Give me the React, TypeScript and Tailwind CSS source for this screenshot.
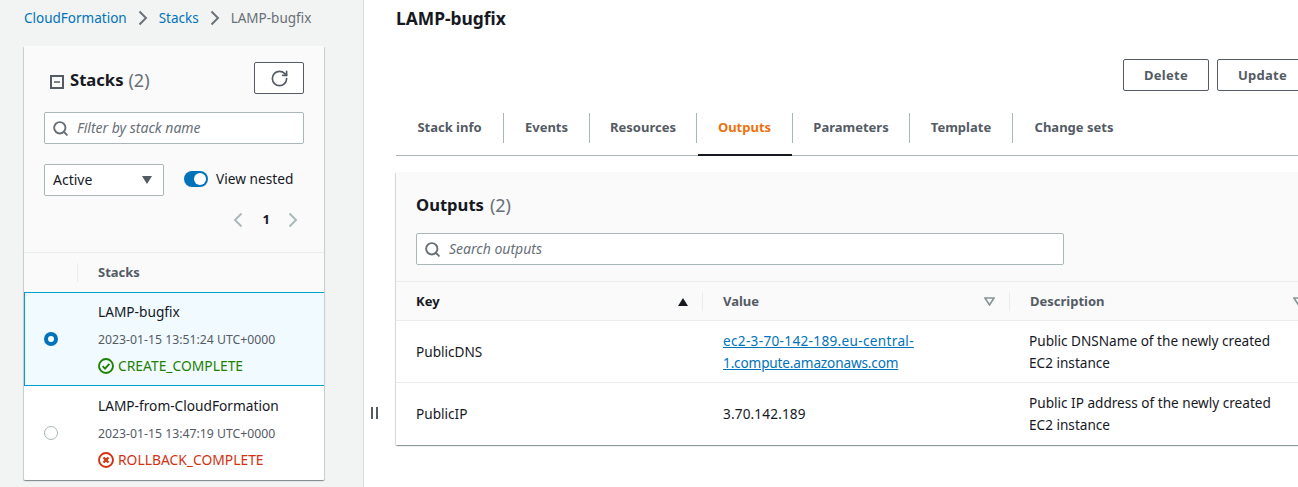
import React from 'react'
import { RotateCw, Search } from "lucide-react";

const tabs = [
  { label: "Stack info", width: "w-[108px]" },
  { label: "Events", width: "w-[86px]" },
  { label: "Resources", width: "w-[107px]" },
  { label: "Outputs", width: "w-[96px]" },
  { label: "Parameters", width: "w-[117px]" },
  { label: "Template", width: "w-[103px]" },
  { label: "Change sets", width: "w-[122px]" },
];

const font = "font-['Noto_Sans',_'Open_Sans',_sans-serif]";

const cardShadow = "shadow-[0_1px_1px_0_rgba(0,28,36,0.3),1px_1px_1px_0_rgba(0,28,36,0.15),-1px_1px_1px_0_rgba(0,28,36,0.15)]";

// Breadcrumb ve sayfalama okları
const Chevron = ({ left = false, color }: { left?: boolean; color: string }) => (
  <svg width="10" height="16" viewBox="0 0 10 16" fill="none" stroke={color} strokeWidth="1.9">
    <path d={left ? "M8.5 1.5L2 8l6.5 6.5" : "M1.5 1.5L8 8l-6.5 6.5"} />
  </svg>
);

const CheckIcon = () => (
  <svg width="16" height="16" viewBox="0 0 16 16" fill="none" stroke="#1d8102" strokeWidth="1.9">
    <circle cx="8" cy="8" r="7" />
    <path d="M4.6 8.2l2.4 2.4 4.4-4.8" />
  </svg>
);

const ErrorIcon = () => (
  <svg width="16" height="16" viewBox="0 0 16 16" fill="none" stroke="#d13212" strokeWidth="1.9">
    <circle cx="8" cy="8" r="7" />
    <path d="M5.5 5.5l5 5M10.5 5.5l-5 5" strokeWidth="2.2" />
  </svg>
);

const StackRow = ({ name, date, status, ok, selected }: { name: string; date: string; status: string; ok: boolean; selected: boolean }) => (
  <div className={`flex h-[94px] items-center ${selected ? "border-y border-l border-[#00a1c9] bg-[#f1faff]" : ""}`}>
    <div className={`flex justify-center ${selected ? "w-[53px] pr-[1px]" : "w-[54px]"}`}>
      {selected ? (
        <span className="h-[14px] w-[14px] rounded-full border-[4px] border-[#0073bb] bg-white" />
      ) : (
        <span className="h-[14px] w-[14px] rounded-full border border-[#aab7b8] bg-white" />
      )}
    </div>
    <div className="flex flex-col pl-[20px]">
      <span className="text-[13.7px] leading-[20px] text-[#16191f]">{name}</span>
      <span className="mt-[8px] text-[12.25px] leading-[20px] text-[#545b64]">{date}</span>
      <span className={`mt-[6px] flex items-center gap-[4px] text-[13.85px] leading-[20px] ${ok ? "text-[#1d8102]" : "text-[#d13212]"}`}>
        {ok ? <CheckIcon /> : <ErrorIcon />}
        {status}
      </span>
    </div>
  </div>
);

const OutputRow = ({ k, value, desc, height, last }: { k: string; value: React.ReactNode; desc: React.ReactNode; height: string; last?: boolean }) => (
  <div className={`flex items-center bg-white text-[13.6px] leading-[22px] text-[#16191f] ${height} ${last ? "" : "border-b border-[#eaeded]"}`}>
    <div className="w-[307px] shrink-0 pl-[20px]">{k}</div>
    <div className="w-[306px] shrink-0 pl-[20px]">{value}</div>
    <div className="w-[300px] shrink-0 pl-[20px]">{desc}</div>
  </div>
);

const App = () => {
  return (
    <div className={`flex h-[487px] w-[1298px] overflow-hidden bg-white ${font}`}>
      {/* Sol panel */}
      <div className="h-full w-[364px] shrink-0 border-r border-[#d5dbdb] bg-[#f2f3f3] pl-[24px]">
        <div className="flex h-[46px] items-start pt-[8px] text-[13.5px] leading-[20px]">
          <span className="text-[#0073bb]">CloudFormation</span>
          <span className="mx-[11px] mt-[2px]"><Chevron color="#687078" /></span>
          <span className="text-[#0073bb]">Stacks</span>
          <span className="mx-[11px] mt-[2px]"><Chevron color="#687078" /></span>
          <span className="text-[#687078]">LAMP-bugfix</span>
        </div>

        <div className={`w-[300px] overflow-hidden rounded-[1px] bg-white ${cardShadow}`}>
          <div className="h-[207px] border-b border-[#eaeded] bg-[#fafafa] px-[20px] pt-[16px]">
            <div className="flex items-center justify-between">
              <div className="flex items-center pl-[6px] pt-[4px]">
                <svg className="mt-[4px]" width="14" height="14" viewBox="0 0 14 14" fill="none" stroke="#545b64" strokeWidth="2">
                  <rect x="1" y="1" width="12" height="12" />
                  <path d="M4 7h6" strokeWidth="1.6" />
                </svg>
                <span className="ml-[6px] text-[16.6px] leading-[24px] font-bold text-[#16191f]">Stacks</span>
                <span className="ml-[5px] text-[18px] leading-[24px] text-[#687078]">(2)</span>
              </div>
              <button className="flex h-[32px] w-[50px] items-center justify-center rounded-[2px] border border-[#545b64] bg-white text-[#545b64]">
                <RotateCw size={19} strokeWidth={2.1} />
              </button>
            </div>
            <div className="mt-[18px] flex h-[32px] items-center rounded-[2px] border border-[#aab7b8] bg-white pl-[7px]">
              <Search size={17} strokeWidth={2.7} className="text-[#687078]" />
              <span className="mb-[2px] ml-[8px] text-[14px] italic text-[#687078]">Filter by stack name</span>
            </div>
            <div className="mt-[20px] flex items-center">
              <div className="flex h-[32px] w-[120px] items-center justify-between rounded-[2px] border border-[#aab7b8] bg-white pl-[8px] pr-[11px]">
                <span className="mb-[2px] text-[14px] text-[#16191f]">Active</span>
                <span className="h-0 w-0 border-x-[5.5px] border-t-[8px] border-x-transparent border-t-[#545b64]" />
              </div>
              <div className="mb-[2px] ml-[20px] flex h-[16px] w-[24px] items-center justify-end rounded-full bg-[#0073bb] pr-[2px]">
                <span className="h-[12px] w-[12px] rounded-full bg-white" />
              </div>
              <span className="ml-[8px] mt-[-1px] text-[13.7px] text-[#16191f]">View nested</span>
            </div>
            <div className="mt-[14px] flex items-center justify-end pr-[6px]">
              <Chevron left color="#aab7b8" />
              <span className="ml-[20px] mr-[18px] text-[13px] font-bold text-[#16191f]">1</span>
              <Chevron color="#aab7b8" />
            </div>
          </div>
          <div className="flex h-[39px] items-center bg-[#fafafa] text-[13px] font-bold text-[#545b64]">
            <div className="h-[19px] w-[54px] border-r border-[#eaeded]" />
            <span className="pl-[20px]">Stacks</span>
          </div>
          <StackRow name="LAMP-bugfix" date="2023-01-15 13:51:24 UTC+0000" status="CREATE_COMPLETE" ok selected />
          <StackRow name="LAMP-from-CloudFormation" date="2023-01-15 13:47:19 UTC+0000" status="ROLLBACK_COMPLETE" ok={false} selected={false} />
        </div>
      </div>

      {/* Ana içerik */}
      <div className="relative min-w-0 flex-1 pl-[32px]">
        <span className="absolute left-[7px] top-[407px] h-[12px] w-[7px] border-x-[2px] border-[#545b64]" />
        <div className="pt-[6px] text-[17.4px] leading-[24px] font-bold text-[#16191f]">LAMP-bugfix</div>
        <div className="mt-[29px] flex justify-end gap-[8px]">
          <button className="h-[32px] w-[86px] shrink-0 rounded-[2px] border border-[#545b64] bg-white pt-[1px] text-[13px] font-bold tracking-[0.25px] text-[#545b64]">Delete</button>
          <button className="mr-[-20px] h-[32px] w-[101px] shrink-0 rounded-[2px] border border-[#545b64] bg-white pt-[1px] text-[13px] font-bold tracking-[0.25px] text-[#545b64]">
            <span className="pr-[10px]">Update</span>
          </button>
        </div>
        <div className="relative mt-[22px] flex h-[43px] items-start border-b border-[#aab7b8]">
          {tabs.map((tab, i) => (
            <div
              key={tab.label}
              className={`relative flex h-[30px] shrink-0 items-center justify-center text-[13px] font-bold ${tab.width} ${i < tabs.length - 1 ? "border-r border-[#aab7b8]" : ""} ${tab.label === "Outputs" ? "text-[#ec7211]" : "text-[#545b64]"}`}
            >
              {tab.label}
              {tab.label === "Outputs" && <span className="absolute bottom-[-13px] left-[1px] right-0 h-[2px] bg-[#16191f]" />}
            </div>
          ))}
        </div>
        <div className={`mt-[16px] w-[920px] rounded-[1px] bg-white ${cardShadow}`}>
          <div className="h-[110px] border-b border-[#eaeded] bg-[#fafafa] px-[20px] pt-[21px]">
            <div className="flex items-center text-[16.6px] leading-[24px]">
              <span className="font-bold text-[#16191f]">Outputs</span>
              <span className="ml-[6px] text-[18px] text-[#687078]">(2)</span>
            </div>
            <div className="mt-[16px] flex h-[32px] w-[648px] items-center rounded-[2px] border border-[#aab7b8] bg-white pl-[7px]">
              <Search size={17} strokeWidth={2.7} className="text-[#687078]" />
              <span className="mb-[2px] ml-[8px] text-[14px] italic text-[#687078]">Search outputs</span>
            </div>
          </div>
          <div className="flex h-[39px] items-center border-b border-[#eaeded] bg-[#fafafa] pt-[1px] text-[13px] font-bold">
            <div className="flex h-[19px] w-[307px] shrink-0 items-center justify-between border-r border-[#eaeded] pl-[20px] pr-[14px] text-[#16191f]">
              Key
              <span className="h-0 w-0 border-x-[5px] border-b-[8px] border-x-transparent border-b-[#16191f]" />
            </div>
            <div className="flex h-[19px] w-[307px] shrink-0 items-center justify-between border-r border-[#eaeded] pl-[20px] pr-[14px] text-[#545b64]">
              Value
              <svg width="11" height="9" viewBox="0 0 11 9" fill="none" stroke="#879596" strokeWidth="1.6"><path d="M1 1h9L5.5 8z" /></svg>
            </div>
            <div className="flex h-[19px] w-[288px] shrink-0 items-center justify-between pl-[20px] text-[#545b64]">
              Description
              <svg className="mr-[-6px]" width="11" height="9" viewBox="0 0 11 9" fill="none" stroke="#879596" strokeWidth="1.6"><path d="M1 1h9L5.5 8z" /></svg>
            </div>
          </div>
          <OutputRow
            k="PublicDNS"
            height="h-[62px]"
            value={
              <a className="text-[#0073bb] underline">
                <span className="tracking-[0.32px]">ec2-3-70-142-189.eu-central-</span>
                <br />
                <span className="tracking-[-0.15px]">1.compute.amazonaws.com</span>
              </a>
            }
            desc={<>Public DNSName of the newly created<br />EC2 instance</>}
          />
          <OutputRow
            k="PublicIP"
            height="h-[62px]"
            last
            value={<span className="tracking-[0.15px]">3.70.142.189</span>}
            desc={<>Public IP address of the newly created<br />EC2 instance</>}
          />
        </div>
      </div>
    </div>
  );
};

export default App;
